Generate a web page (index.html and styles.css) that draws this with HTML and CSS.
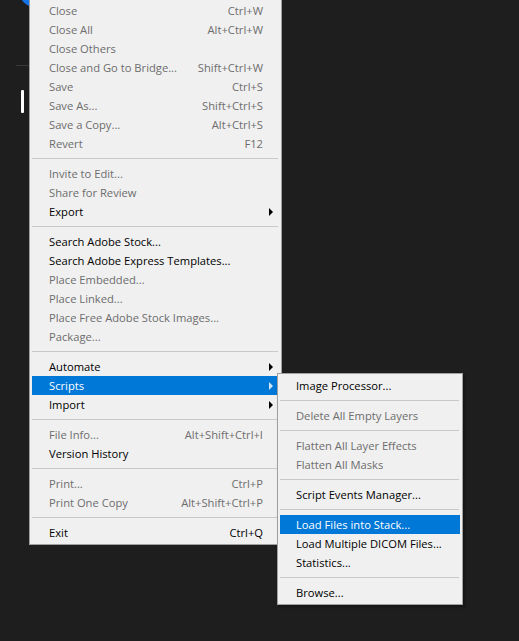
FILE: index.html
```html
<!DOCTYPE html>
<html>
<head>
<meta charset="utf-8">
<link rel="stylesheet" href="styles.css">
</head>
<body>
<div class="screen">
  <div class="deco dot"></div>
  <div class="deco rule"></div>
  <div class="deco bar"></div>

  <div class="menu main">
    <div class="item off"><span class="label">Close</span><span class="key">Ctrl+W</span><span class="sub"></span></div>
    <div class="item off"><span class="label">Close All</span><span class="key">Alt+Ctrl+W</span><span class="sub"></span></div>
    <div class="item off"><span class="label">Close Others</span><span class="key"></span><span class="sub"></span></div>
    <div class="item off"><span class="label">Close and Go to Bridge...</span><span class="key">Shift+Ctrl+W</span><span class="sub"></span></div>
    <div class="item off"><span class="label">Save</span><span class="key">Ctrl+S</span><span class="sub"></span></div>
    <div class="item off"><span class="label">Save As...</span><span class="key">Shift+Ctrl+S</span><span class="sub"></span></div>
    <div class="item off"><span class="label">Save a Copy...</span><span class="key">Alt+Ctrl+S</span><span class="sub"></span></div>
    <div class="item off"><span class="label">Revert</span><span class="key">F12</span><span class="sub"></span></div>
    <div class="sep"></div>
    <div class="item off"><span class="label">Invite to Edit...</span><span class="key"></span><span class="sub"></span></div>
    <div class="item off"><span class="label">Share for Review</span><span class="key"></span><span class="sub"></span></div>
    <div class="item"><span class="label">Export</span><span class="key"></span><span class="sub"><i class="arrow"></i></span></div>
    <div class="sep"></div>
    <div class="item"><span class="label">Search Adobe Stock...</span><span class="key"></span><span class="sub"></span></div>
    <div class="item"><span class="label">Search Adobe Express Templates...</span><span class="key"></span><span class="sub"></span></div>
    <div class="item off"><span class="label">Place Embedded...</span><span class="key"></span><span class="sub"></span></div>
    <div class="item off"><span class="label">Place Linked...</span><span class="key"></span><span class="sub"></span></div>
    <div class="item off"><span class="label">Place Free Adobe Stock Images...</span><span class="key"></span><span class="sub"></span></div>
    <div class="item off"><span class="label">Package...</span><span class="key"></span><span class="sub"></span></div>
    <div class="sep"></div>
    <div class="item"><span class="label">Automate</span><span class="key"></span><span class="sub"><i class="arrow"></i></span></div>
    <div class="item active"><span class="label">Scripts</span><span class="key"></span><span class="sub"><i class="arrow"></i></span></div>
    <div class="item"><span class="label">Import</span><span class="key"></span><span class="sub"><i class="arrow"></i></span></div>
    <div class="sep"></div>
    <div class="item off"><span class="label">File Info...</span><span class="key">Alt+Shift+Ctrl+I</span><span class="sub"></span></div>
    <div class="item"><span class="label">Version History</span><span class="key"></span><span class="sub"></span></div>
    <div class="sep"></div>
    <div class="item off"><span class="label">Print...</span><span class="key">Ctrl+P</span><span class="sub"></span></div>
    <div class="item off"><span class="label">Print One Copy</span><span class="key">Alt+Shift+Ctrl+P</span><span class="sub"></span></div>
    <div class="sep"></div>
    <div class="item"><span class="label">Exit</span><span class="key">Ctrl+Q</span><span class="sub"></span></div>
  </div>

  <div class="menu submenu">
    <div class="item"><span class="label">Image Processor...</span></div>
    <div class="sep"></div>
    <div class="item off"><span class="label">Delete All Empty Layers</span></div>
    <div class="sep"></div>
    <div class="item off"><span class="label">Flatten All Layer Effects</span></div>
    <div class="item off"><span class="label">Flatten All Masks</span></div>
    <div class="sep"></div>
    <div class="item"><span class="label">Script Events Manager...</span></div>
    <div class="sep"></div>
    <div class="item active"><span class="label">Load Files into Stack...</span></div>
    <div class="item"><span class="label">Load Multiple DICOM Files...</span></div>
    <div class="item"><span class="label">Statistics...</span></div>
    <div class="sep"></div>
    <div class="item"><span class="label">Browse...</span></div>
  </div>
</div>
</body>
</html>
```

FILE: styles.css
```css
html, body {
  margin: 0;
  padding: 0;
  background: #1e1e1e;
}

.screen {
  position: relative;
  width: 519px;
  height: 641px;
  overflow: hidden;
  background: #1e1e1e;
  font-family: "Open Sans", "Noto Sans", "Liberation Sans", sans-serif;
  font-size: 11.2px;
}

.deco {
  position: absolute;
}

.dot {
  left: 20px;
  top: -22px;
  width: 29px;
  height: 29px;
  border-radius: 50%;
  background: #1473e6;
}

.rule {
  left: 16px;
  top: 65px;
  width: 14px;
  height: 1px;
  background: #383838;
}

.bar {
  left: 21px;
  top: 90px;
  width: 3px;
  height: 23px;
  background: #ffffff;
  border-radius: 1px;
}

.menu {
  background: #f0f0f0;
  border: 1px solid #a0a0a0;
  padding: 2px;
  box-sizing: border-box;
}

.main {
  position: relative;
  margin-left: 29px;
  margin-top: -2px;
  width: 253px;
}

.submenu {
  position: absolute;
  left: 277px;
  top: 373px;
  width: 186px;
  box-shadow: 2px 2px 3px rgba(0, 0, 0, 0.35);
}

.item {
  display: flex;
  align-items: center;
  height: 19px;
  line-height: 19px;
  padding-left: 17px;
  color: #000000;
  white-space: nowrap;
}

.submenu .item {
  padding-left: 16px;
}

.item.off {
  color: #6d6d6d;
}

.item.active {
  background: #0078d7;
  color: #ffffff;
}

.label {
  flex: 1;
}

.key {
  text-align: right;
}

.sub {
  width: 16px;
  height: 19px;
  display: flex;
  align-items: center;
}

.arrow {
  display: block;
  margin-left: 6px;
  width: 0;
  height: 0;
  border-left: 4px solid #000000;
  border-top: 4px solid transparent;
  border-bottom: 4px solid transparent;
}

.active .arrow {
  border-left-color: #cfe6fb;
}

.sep {
  height: 1px;
  margin: 5px 1px 5px 0;
  background: #c9c9c9;
}
```
